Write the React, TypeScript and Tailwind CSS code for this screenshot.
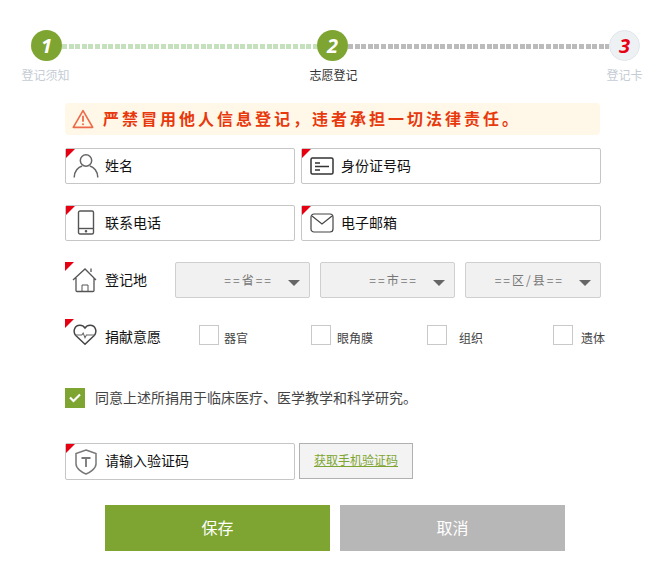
import React from 'react';

const font = { fontFamily: '"Noto Sans CJK SC", "Noto Sans", sans-serif' };

const Corner = () => (
  <span className="absolute left-0 top-0 h-[9px] w-[9px] bg-[#e60012] [clip-path:polygon(0_0,100%_0,0_100%)]" />
);

const UserIcon = () => (
  <svg width="26" height="26" viewBox="0 0 26 26" fill="none" stroke="#666" strokeWidth="1.5">
    <circle cx="13" cy="7.5" r="5.7" />
    <path d="M1.2 24.5c0-6.5 4-10.5 8-11.5M24.8 24.5c0-6.5-4-10.5-8-11.5" />
  </svg>
);

const CardIcon = () => (
  <svg width="24" height="20" viewBox="0 0 24 20" fill="none" stroke="#333" strokeWidth="1.5">
    <rect x="1" y="2" width="22" height="16" rx="1.5" />
    <path d="M5 7h5M5 10.5h14M5 14h5" />
  </svg>
);

const PhoneIcon = () => (
  <svg width="18" height="26" viewBox="0 0 18 26" fill="none" stroke="#555" strokeWidth="1.4">
    <rect x="1.5" y="1" width="15" height="23" rx="1.5" />
    <path d="M1.5 18.500h15" />
    <circle cx="9" cy="21.300" r="0.6" fill="#555" />
  </svg>
);

const MailIcon = () => (
  <svg width="24" height="20" viewBox="0 0 24 20" fill="none" stroke="#444" strokeWidth="1.2">
    <rect x="1" y="1" width="22" height="18" rx="3" />
    <path d="M2 3l10 8 10-8" />
  </svg>
);

const HomeIcon = () => (
  <svg width="26" height="26" viewBox="0 0 26 26" fill="none" stroke="#555" strokeWidth="1.3">
    <path d="M1 13L13 2l11 11M4 11v12.500a1 1 0 0 0 1 1h16a1 1 0 0 0 1-1V11M19 5V1.500" />
    <path d="M10 24.500V18h6v6.500" strokeWidth="1" />
  </svg>
);

const HeartIcon = () => (
  <svg width="24" height="23" viewBox="0 0 26 24" fill="none" stroke="#444" strokeWidth="1.6">
    <path d="M13 22.500L3 13C-.5 9 1.500 2 7.500 2c2.500 0 4.500 1.500 5.500 3 1-1.500 3-3 5.500-3 6 0 8 7 4.500 11z" />
    <path d="M2 12.500h7.500l1.500-2 2 5 1.500-3h9.500" strokeWidth="1.100" stroke="#666" />
  </svg>
);

const ShieldIcon = () => (
  <svg width="22" height="26" viewBox="0 0 22 26" fill="none" stroke="#777" strokeWidth="1.5">
    <path d="M11 1l10 3.500V15c0 4.500-6 8.500-10 10C7 23.500 1 19.500 1 15V4.500z" />
    <path d="M6.500 9h9M11 9v9" strokeWidth="1.800" />
  </svg>
);

const WarnIcon = () => (
  <svg width="22" height="20" viewBox="0 0 24 22" fill="none" stroke="#ec6a4a" strokeWidth="1.800">
    <path d="M12 1.800L1.300 20.200h21.400z" strokeLinejoin="round" />
    <path d="M12 7.500v6.500" strokeWidth="2" />
    <circle cx="12" cy="16.800" r="1.100" fill="#ec6a4a" stroke="none" />
  </svg>
);

const Caret = () => <span className="h-0 w-0 border-x-[6px] border-t-[6px] border-x-transparent border-t-[#666]" />;

const Step = ({ n, label, done, active, labelClass = '' }: { n: number; label: string; done: boolean; active?: boolean; labelClass?: string }) => (
  <div className="z-10 flex w-[63px] flex-col items-center">
    <div
      className={`flex h-[31px] w-[31px] items-center justify-center rounded-full text-[20px] font-bold italic ${
        done ? 'bg-[#7ea531] text-white' : 'border border-[#e2e6ea] bg-[#eef1f4] text-[#e60012]'
      }`}
      style={{ fontFamily: '"Open Sans", sans-serif' }}
    >
      {n}
    </div>
    <div className={`mt-[5px] whitespace-nowrap text-[12px] leading-[18px] ${active ? 'text-[#333]' : 'text-[#c4ccd4]'} ${labelClass}`}>{label}</div>
  </div>
);

const Field = ({ icon, label, className }: { icon: React.ReactNode; label: string; className: string }) => (
  <div className={`relative flex h-[36px] items-center rounded-[2px] border border-[#c6c6c6] bg-white ${className}`}>
    <Corner />
    <span className="flex w-[39px] shrink-0 justify-center">{icon}</span>
    <span className="mb-[2px] text-[14px] text-[#111]">{label}</span>
  </div>
);

const Select = ({ label, className }: { label: string; className: string }) => (
  <div className={`flex h-[36px] items-center justify-end rounded-[2px] border border-[#cfcfcf] bg-[#f1f1f1] pr-[9px] ${className}`}>
    <span className="mr-[15px] text-[12px] tracking-[2px] text-[#777]">{label}</span>
    <span className="mt-[6px] flex"><Caret /></span>
  </div>
);

const Organ = ({ label, className, gap }: { label: string; className: string; gap: string }) => (
  <div className={`mt-[6px] flex shrink-0 items-start ${className}`}>
    <span className="h-[20px] w-[20px] shrink-0 border border-[#c9c9c9] bg-white" />
    <span className={`mt-[4px] whitespace-nowrap text-[12px] leading-[18px] text-[#444] ${gap}`}>{label}</span>
  </div>
);

const App: React.FC = () => {
  return (
    <div className="min-h-[579px] w-[672px] overflow-hidden bg-white" style={font}>
      {/* Stepper */}
      <div className="flex pl-[15px] pr-[16px] pt-[30px]">
        <Step n={1} label="登记须知" done labelClass="mr-[2px]" />
        <div className="-mx-[16px] mt-[14px] h-[5px] w-[255px] bg-[repeating-linear-gradient(90deg,#c5e0bd_0_5px,transparent_5px_6.6px)]" />
        <Step n={2} label="志愿登记" done active labelClass="ml-[2px]" />
        <div className="-mx-[16px] mt-[14px] h-[5px] flex-1 bg-[repeating-linear-gradient(90deg,#bbbbbb_0_5px,transparent_5px_6.6px)]" />
        <Step n={3} label="登记卡" done={false} />
      </div>

      <div className="ml-[65px] w-[536px]">
        {/* Notice */}
        <div className="mt-[19px] flex h-[32px] w-[535px] items-center rounded-[4px] bg-[#fff8e8] pl-[7px]">
          <WarnIcon />
          <span className="mb-[2px] ml-[9px] whitespace-nowrap text-[16px] font-bold tracking-[3px] text-[#e8380d]">
            严禁冒用他人信息登记，违者承担一切法律责任。
          </span>
        </div>

        <div className="mt-[13px] flex gap-[6px]">
          <Field icon={<UserIcon />} label="姓名" className="w-[230px]" />
          <Field icon={<CardIcon />} label="身份证号码" className="w-[300px]" />
        </div>
        <div className="mt-[21px] flex gap-[6px]">
          <Field icon={<PhoneIcon />} label="联系电话" className="w-[230px]" />
          <Field icon={<MailIcon />} label="电子邮箱" className="w-[300px]" />
        </div>

        {/* Region */}
        <div className="relative mt-[21px] flex h-[36px] items-center">
          <Corner />
          <span className="flex w-[40px] shrink-0 justify-center"><HomeIcon /></span>
          <span className="mb-[2px] w-[70px] shrink-0 text-[14px] text-[#111]">登记地</span>
          <div className="flex gap-[10px]">
            <Select label="==省==" className="w-[135px]" />
            <Select label="==市==" className="w-[135px]" />
            <Select label="==区/县==" className="w-[136px]" />
          </div>
        </div>

        {/* Donation */}
        <div className="relative mt-[21px] flex h-[37px] items-start">
          <Corner />
          <span className="flex w-[40px] shrink-0 justify-center pt-[4px]"><HeartIcon /></span>
          <span className="mt-[7px] w-[94px] shrink-0 text-[14px] text-[#111]">捐献意愿</span>
          <Organ label="器官" className="w-[112px]" gap="ml-[5px]" />
          <Organ label="眼角膜" className="w-[116px]" gap="ml-[6px]" />
          <Organ label="组织" className="w-[126px]" gap="ml-[12px]" />
          <Organ label="遗体" className="w-[60px]" gap="ml-[8px]" />
        </div>

        {/* Consent */}
        <div className="mt-[32px] flex items-center">
          <span className="flex h-[20px] w-[20px] items-center justify-center bg-[#7ea531]">
            <svg width="12" height="10" viewBox="0 0 12 10" fill="none" stroke="#fff" strokeWidth="2.200">
              <path d="M1 4.500l3.500 3.500L11 1.500" />
            </svg>
          </span>
          <span className="mb-[2px] ml-[10px] text-[14px] leading-[18px] text-[#444]">同意上述所捐用于临床医疗、医学教学和科学研究。</span>
        </div>

        {/* Verify */}
        <div className="mt-[35px] flex items-start gap-[4px]">
          <Field icon={<ShieldIcon />} label="请输入验证码" className="h-[37px] w-[230px]" />
          <button className="h-[36px] w-[114px] border border-[#b0b0b0] bg-[#f3f3f3] pb-[2px] text-[12px] text-[#7ea531] underline">
            获取手机验证码
          </button>
        </div>

        {/* Actions */}
        <div className="ml-[40px] mt-[25px] flex gap-[10px]">
          <button className="h-[46px] w-[225px] bg-[#7ea531] pb-[2px] text-[16px] text-white">保存</button>
          <button className="h-[46px] w-[225px] bg-[#b7b7b7] pb-[2px] text-[16px] text-white">取消</button>
        </div>
      </div>
    </div>
  );
};

export default App;
